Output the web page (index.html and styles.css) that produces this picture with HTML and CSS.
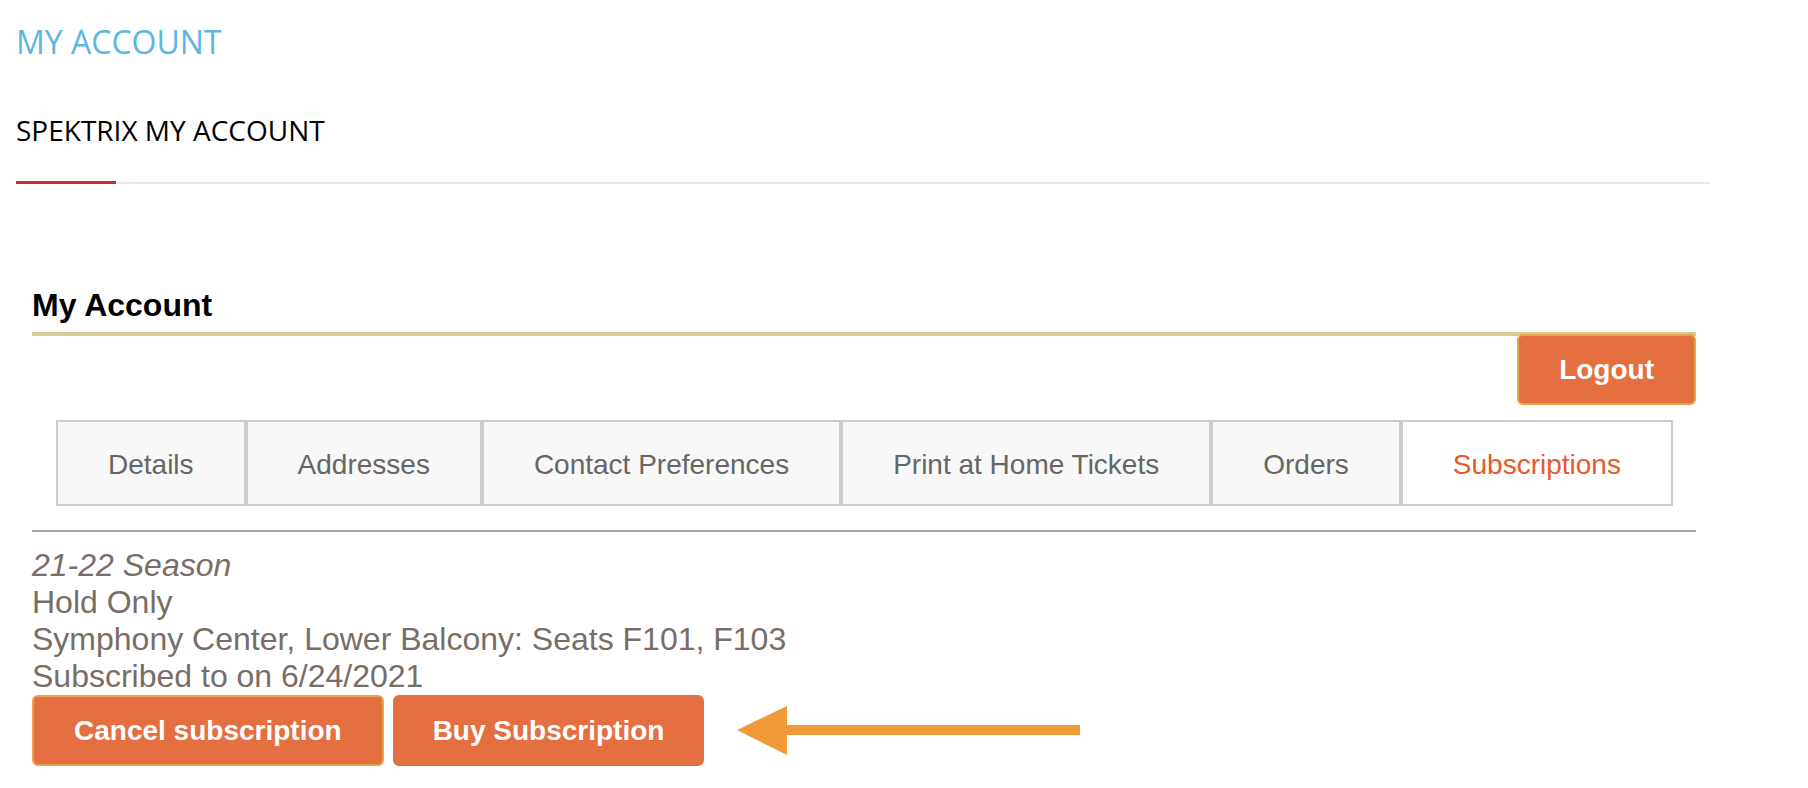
FILE: index.html
```html
<!DOCTYPE html>
<html lang="en">

<head>
    <meta charset="UTF-8">
    <meta name="viewport" content="width=device-width, initial-scale=1.0">
    <title>My Account</title>

    <link rel="stylesheet" href="styles.css">
</head>

<body>
    <!-- Page header -->
    <div class="page">
        <h1 class="page-title">MY ACCOUNT</h1>
        <h2 class="page-subtitle">SPEKTRIX MY ACCOUNT</h2>
        <div class="title-rule">
            <span class="rule-accent"></span>
            <span class="rule-rest"></span>
        </div>

        <!-- Account section -->
        <div class="account">
            <h3 class="account-title">My Account</h3>

            <div class="logout-row">
                <button class="btn btn-outlined">Logout</button>
            </div>

            <!-- Tabs -->
            <ul class="tabs">
                <li class="tab">Details</li>
                <li class="tab">Addresses</li>
                <li class="tab">Contact Preferences</li>
                <li class="tab">Print at Home Tickets</li>
                <li class="tab">Orders</li>
                <li class="tab active">Subscriptions</li>
            </ul>

            <!-- Subscription info -->
            <div class="subscription">
                <div class="season">21-22 Season</div>
                <div>Hold Only</div>
                <div>Symphony Center, Lower Balcony: Seats F101, F103</div>
                <div>Subscribed to on 6/24/2021</div>

                <div class="actions">
                    <button class="btn btn-outlined">Cancel subscription</button>
                    <button class="btn btn-buy">Buy Subscription</button>
                    <svg class="arrow" width="343" height="50" viewBox="0 0 343 50">
                        <polygon points="0,24 50,0 50,49" fill="#f19b38" />
                        <rect x="48" y="19" width="295" height="10" fill="#f19b38" />
                    </svg>
                </div>
            </div>
        </div>
    </div>
</body>

</html>
```

FILE: styles.css
```css
/* Reset */
* {
    margin: 0;
    padding: 0;
    box-sizing: border-box;
}

body {
    background: #fff;
    font-family: 'Liberation Sans', Arial, sans-serif;
}

/* Page wrapper */
.page {
    width: 1710px;
    padding: 22px 0 0 16px;
}

.page-title {
    font-family: 'Open Sans', sans-serif;
    font-weight: 400;
    font-size: 32px;
    line-height: 40px;
    color: #5cb6e2;
}

.page-subtitle {
    font-family: 'Open Sans', sans-serif;
    font-weight: 400;
    font-size: 28px;
    line-height: 36px;
    color: #000;
    margin-top: 50px;
}

/* Rule under the subtitle */
.title-rule {
    display: flex;
    align-items: flex-end;
    margin-top: 33px;
}

.rule-accent {
    width: 100px;
    height: 3px;
    background: #c0312b;
}

.rule-rest {
    flex: 1;
    height: 2px;
    background: #e8e8e8;
}

/* Account section */
.account {
    width: 1664px;
    margin: 101px 0 0 16px;
}

.account-title {
    font-size: 32px;
    line-height: 40px;
    font-weight: bold;
    color: #000;
    padding-bottom: 7px;
    border-bottom: 4px solid #d5cb94;
}

.logout-row {
    display: flex;
    justify-content: flex-end;
    margin-top: -2px;
}

/* Buttons */
.btn {
    font-family: 'Liberation Sans', Arial, sans-serif;
    font-size: 28px;
    font-weight: bold;
    line-height: 33px;
    color: #fff;
    background: #e46f41;
    border: 2px solid #e46f41;
    border-radius: 6px;
    padding: 17px 40px;
    cursor: pointer;
}

.btn-outlined {
    border-color: #e9a34a;
}

.btn-buy {
    padding: 17px 38px;
}

/* Tabs */
.tabs {
    list-style: none;
    display: flex;
    margin: 15px 0 0 24px;
}

.tab {
    font-size: 28px;
    line-height: 34px;
    color: #666;
    background: #f8f8f8;
    border: 2px solid #ccc;
    padding: 26px 50px 22px;
}

.tab.active {
    background: #fff;
    color: #e45a2c;
}

/* Subscription details */
.subscription {
    margin-top: 24px;
    border-top: 2px solid #a3a3a3;
    padding-top: 15px;
    font-size: 32px;
    color: #786d67;
}

.season {
    font-style: italic;
}

.actions {
    display: flex;
    align-items: center;
    gap: 9px;
}

.arrow {
    margin-left: 24px;
}
```
